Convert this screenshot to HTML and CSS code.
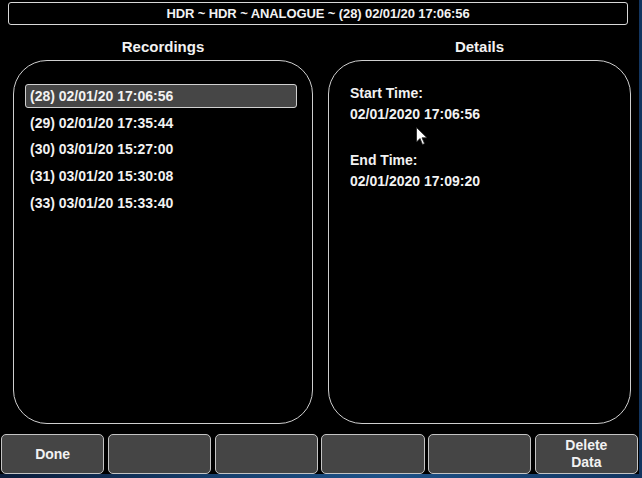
FILE: index.html
```html
<!DOCTYPE html>
<html>
<head>
<meta charset="utf-8">
<link rel="stylesheet" href="styles.css">
</head>
<body>
<div class="screen">
  <div class="title">HDR ~ HDR ~ ANALOGUE ~ (28) 02/01/20 17:06:56</div>
  <div class="columns">
    <div class="col col-left">
      <div class="col-head">Recordings</div>
      <div class="panel list-panel">
        <div class="item selected">(28) 02/01/20 17:06:56</div>
        <div class="item">(29) 02/01/20 17:35:44</div>
        <div class="item">(30) 03/01/20 15:27:00</div>
        <div class="item">(31) 03/01/20 15:30:08</div>
        <div class="item">(33) 03/01/20 15:33:40</div>
      </div>
    </div>
    <div class="col col-right">
      <div class="col-head">Details</div>
      <div class="panel details-panel">
        <div class="group">
          <div class="line">Start Time:</div>
          <div class="line">02/01/2020 17:06:56</div>
        </div>
        <div class="group">
          <div class="line">End Time:</div>
          <div class="line">02/01/2020 17:09:20</div>
        </div>
      </div>
    </div>
  </div>
  <div class="buttons">
    <div class="btn">Done</div>
    <div class="btn"></div>
    <div class="btn"></div>
    <div class="btn"></div>
    <div class="btn"></div>
    <div class="btn">Delete<br>Data</div>
  </div>
  <svg class="cursor" width="12" height="19" viewBox="0 0 12 19">
    <path d="M0.5 0.5 L0.5 15 L4 11.5 L6.5 17.5 L8.5 16.6 L6 10.8 L11 10.8 Z" fill="#ffffff" stroke="#222" stroke-width="0.8"/>
  </svg>
</div>
</body>
</html>
```

FILE: styles.css
```css
html, body {
  margin: 0;
  padding: 0;
}
body {
  width: 642px;
  height: 478px;
  overflow: hidden;
  background: linear-gradient(90deg, #0a1c3a 0%, #17406e 35%, #1e5288 60%, #123560 100%);
  font-family: "Liberation Sans", Arial, sans-serif;
  font-weight: bold;
  color: #f2f2f2;
}
.screen {
  position: relative;
  width: 639px;
  height: 474px;
  background: #000;
  display: flex;
  flex-direction: column;
}
.title {
  box-sizing: border-box;
  margin: 2px 11px 0 8px;
  height: 23px;
  border: 1px solid #d8d8d8;
  border-radius: 3px;
  text-align: center;
  font-size: 13px;
  line-height: 21px;
  letter-spacing: -0.1px;
}
.columns {
  display: flex;
  padding-left: 13px;
  gap: 15px;
}
.col-left { width: 300px; }
.col-right { width: 303px; }
.col-head {
  height: 35px;
  box-sizing: border-box;
  padding-top: 14px;
  line-height: 16px;
  font-size: 15px;
  text-align: center;
}
.panel {
  box-sizing: border-box;
  height: 364px;
  border: 1px solid #cfcfcf;
  border-radius: 34px;
}
.list-panel {
  padding: 23px 15px 0 11px;
  display: flex;
  flex-direction: column;
  gap: 2.7px;
}
.item {
  box-sizing: border-box;
  height: 24px;
  line-height: 22px;
  padding-left: 4px;
  font-size: 14px;
  border: 1px solid transparent;
  border-radius: 3px;
}
.item.selected {
  background: #464646;
  border-color: #d0d0d0;
}
.details-panel {
  padding: 22px 0 0 21px;
  display: flex;
  flex-direction: column;
  gap: 25px;
}
.line {
  font-size: 14px;
  line-height: 21px;
}
.buttons {
  display: flex;
  gap: 3.5px;
  margin-top: 10px;
  padding: 0 1px 0 1px;
}
.btn {
  flex: 1;
  box-sizing: border-box;
  height: 40px;
  background: #454545;
  border: 1px solid #c4c4c4;
  border-radius: 5px;
  display: flex;
  align-items: center;
  justify-content: center;
  text-align: center;
  font-size: 14px;
  line-height: 17px;
}
.cursor {
  position: absolute;
  left: 416px;
  top: 127px;
}
```
